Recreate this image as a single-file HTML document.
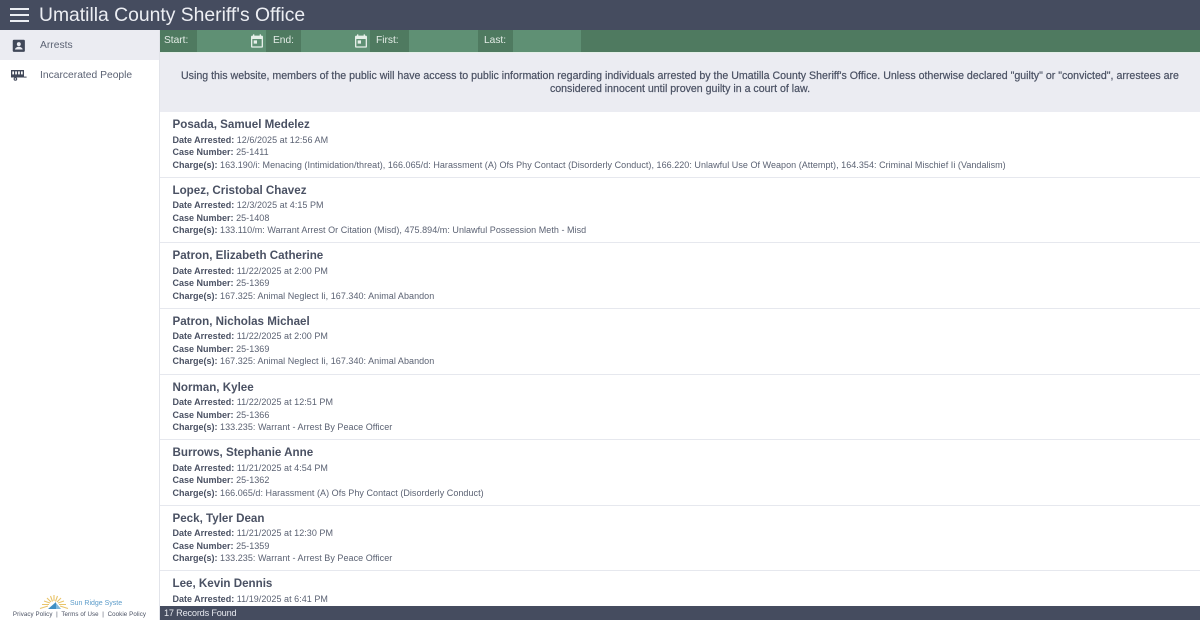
<!DOCTYPE html>
<html><head><meta charset="utf-8"><title>Umatilla County Sheriff's Office</title>
<style>
*{box-sizing:border-box}
html,body{margin:0;padding:0;width:1200px;height:620px;overflow:hidden;background:#fff;font-family:"Liberation Sans",sans-serif;color:#4a5163}
.abs{position:absolute}
#hdr{left:0;top:0;width:1200px;height:30px;background:#454c5f}
#hdr .t{position:absolute;left:39px;top:3px;font-size:19.33px;line-height:26px;color:#eceef3;white-space:nowrap}
#hdr i{position:absolute;left:10px;width:19px;height:2px;background:#eceef3}
#side{left:0;top:30px;width:160px;height:590px;background:#fff;border-right:1px solid #e2e4ea}
.nav{position:absolute;left:0;width:159px;height:30px;font-size:10.3px;line-height:31px;padding-left:40px;color:#5b6273}
#bar{left:160px;top:30px;width:1040px;height:22px;background:#4f7a60}
#bar .f{position:absolute;top:0;height:22px;background:#5f9074}
#bar .l{position:absolute;top:0;height:22px;line-height:22.5px;font-size:10.2px;color:#e4ece7}
#bar svg{position:absolute;top:3px}
#notice{left:160px;top:52px;width:1040px;height:60px;background:#ebecf2;border-top:1px solid #e4efe8;text-align:center;font-size:10.62px;line-height:13.5px;color:#4a5163;padding:16.9px 0 0;white-space:nowrap;-webkit-text-stroke:.2px #4a5163}
#list{left:160px;top:112px;width:1040px;height:494px;overflow:hidden;background:#fff;padding-top:.3px}
.r{height:65.57px;border-bottom:1px solid #e6e8ee;padding:5px 0 0 12.5px;font-size:9px;line-height:12.5px;white-space:nowrap;letter-spacing:.04px;color:#5b6273}
.r h3{margin:0 0 .9px;font-size:11.6px;line-height:15.6px;font-weight:700;color:#4a5163;letter-spacing:0}
.r b{color:#4a5163;letter-spacing:0}
#foot{left:160px;top:606px;width:1040px;height:14px;background:#454c5f;color:#e6e8ee;font-size:9.2px;line-height:15px;padding-left:4px;letter-spacing:-.2px}
#sun{left:39px;top:594px}
#brand{left:70px;top:598.5px;font-size:7px;line-height:9px;color:#5b9bc9;white-space:nowrap}
#pol{left:0;top:611px;width:159px;text-align:center;font-size:6.15px;line-height:8px;color:#4a5163;white-space:nowrap;letter-spacing:.1px}
</style></head><body>
<div class="abs" id="hdr"><i style="top:8px"></i><i style="top:14px"></i><i style="top:20px"></i><div class="t">Umatilla County Sheriff's Office</div></div>
<div class="abs" id="side">
<div class="nav" style="top:0;background:#ebecf2">Arrests</div>
<svg style="position:absolute;left:12px;top:8.5px" width="14" height="14" viewBox="0 0 15 15"><rect x=".8" y=".8" width="13" height="13" rx="1.2" fill="#414859"/><circle cx="7.3" cy="5.5" r="2.1" fill="#ebecf2"/><path d="M3.2 11.3c0-2 2.6-3 4.1-3s4.1 1 4.1 3z" fill="#ebecf2"/></svg>
<div class="nav" style="top:30px">Incarcerated People</div>
<svg style="position:absolute;left:11px;top:39.5px" width="16" height="12" viewBox="0 0 16 12"><path d="M0 0h13v7.5H0z" fill="#414859"/><path d="M13 6.6h2.6v1H13z" fill="#414859"/><rect x="1.3" y="1.4" width="1.7" height="3" fill="#fff"/><rect x="4.2" y="1.4" width="1.7" height="3" fill="#fff"/><rect x="7.1" y="1.4" width="1.7" height="3" fill="#fff"/><rect x="10" y="1.4" width="1.7" height="3" fill="#fff"/><circle cx="4.4" cy="9" r="1.8" fill="#414859"/><circle cx="4.4" cy="9" r=".7" fill="#fff"/></svg>
</div>
<div class="abs" id="bar">
<div class="l" style="left:4px">Start:</div>
<div class="f" style="left:37px;width:69px"></div>
<svg style="left:88.7px;top:2.6px" width="16" height="16" viewBox="0 0 24 24"><path fill="#e6efe9" d="M19 4h-1V2h-2v2H8V2H6v2H5a2 2 0 0 0-2 2v14a2 2 0 0 0 2 2h14a2 2 0 0 0 2-2V6a2 2 0 0 0-2-2zm0 16H5V9h14zM7 11h5v5H7z"/></svg>
<div class="l" style="left:113px">End:</div>
<div class="f" style="left:141px;width:69px"></div>
<svg style="left:192.7px;top:2.6px" width="16" height="16" viewBox="0 0 24 24"><path fill="#e6efe9" d="M19 4h-1V2h-2v2H8V2H6v2H5a2 2 0 0 0-2 2v14a2 2 0 0 0 2 2h14a2 2 0 0 0 2-2V6a2 2 0 0 0-2-2zm0 16H5V9h14zM7 11h5v5H7z"/></svg>
<div class="l" style="left:216px">First:</div>
<div class="f" style="left:249px;width:69px"></div>
<div class="l" style="left:324px">Last:</div>
<div class="f" style="left:353px;width:68px"></div>
</div>
<div class="abs" id="notice">Using this website, members of the public will have access to public information regarding individuals arrested by the Umatilla County Sheriff's Office. Unless otherwise declared "guilty" or "convicted", arrestees are<br>considered innocent until proven guilty in a court of law.</div>
<div class="abs" id="list">
<div class="r"><h3>Posada, Samuel Medelez</h3><b>Date Arrested:</b> 12/6/2025 at 12:56 AM<br><b>Case Number:</b> 25-1411<br><b>Charge(s):</b> 163.190/i: Menacing (Intimidation/threat), 166.065/d: Harassment (A) Ofs Phy Contact (Disorderly Conduct), 166.220: Unlawful Use Of Weapon (Attempt), 164.354: Criminal Mischief Ii (Vandalism)</div>
<div class="r"><h3>Lopez, Cristobal Chavez</h3><b>Date Arrested:</b> 12/3/2025 at 4:15 PM<br><b>Case Number:</b> 25-1408<br><b>Charge(s):</b> 133.110/m: Warrant Arrest Or Citation (Misd), 475.894/m: Unlawful Possession Meth - Misd</div>
<div class="r"><h3>Patron, Elizabeth Catherine</h3><b>Date Arrested:</b> 11/22/2025 at 2:00 PM<br><b>Case Number:</b> 25-1369<br><b>Charge(s):</b> 167.325: Animal Neglect Ii, 167.340: Animal Abandon</div>
<div class="r"><h3>Patron, Nicholas Michael</h3><b>Date Arrested:</b> 11/22/2025 at 2:00 PM<br><b>Case Number:</b> 25-1369<br><b>Charge(s):</b> 167.325: Animal Neglect Ii, 167.340: Animal Abandon</div>
<div class="r"><h3>Norman, Kylee</h3><b>Date Arrested:</b> 11/22/2025 at 12:51 PM<br><b>Case Number:</b> 25-1366<br><b>Charge(s):</b> 133.235: Warrant - Arrest By Peace Officer</div>
<div class="r"><h3>Burrows, Stephanie Anne</h3><b>Date Arrested:</b> 11/21/2025 at 4:54 PM<br><b>Case Number:</b> 25-1362<br><b>Charge(s):</b> 166.065/d: Harassment (A) Ofs Phy Contact (Disorderly Conduct)</div>
<div class="r"><h3>Peck, Tyler Dean</h3><b>Date Arrested:</b> 11/21/2025 at 12:30 PM<br><b>Case Number:</b> 25-1359<br><b>Charge(s):</b> 133.235: Warrant - Arrest By Peace Officer</div>
<div class="r"><h3>Lee, Kevin Dennis</h3><b>Date Arrested:</b> 11/19/2025 at 6:41 PM</div>
</div>
<div class="abs" id="foot">17 Records Found</div>
<svg class="abs" id="sun" width="30" height="16" viewBox="0 0 30 16"><g stroke="#e9c46a" stroke-width="1.1" fill="none"><path d="M1 14.5 9 12M3 10.5 10 10.5M5 7 11 9M8 4 12 8M11.5 2 13.5 7.5M15 1 15 7M18.5 2 16.5 7.5M22 4 18 8M25 7 19 9M27 10.5 20 10.5M29 14.5 21 12"/></g><path d="M9 15 17 8v7z" fill="#3f8fc4"/><path d="M17 9 22 15h-5z" fill="#7fb8dc"/></svg>
<div class="abs" id="brand">Sun Ridge Syste</div>
<div class="abs" id="pol">Privacy Policy &nbsp;|&nbsp; Terms of Use &nbsp;|&nbsp; Cookie Policy</div>
</body></html>
